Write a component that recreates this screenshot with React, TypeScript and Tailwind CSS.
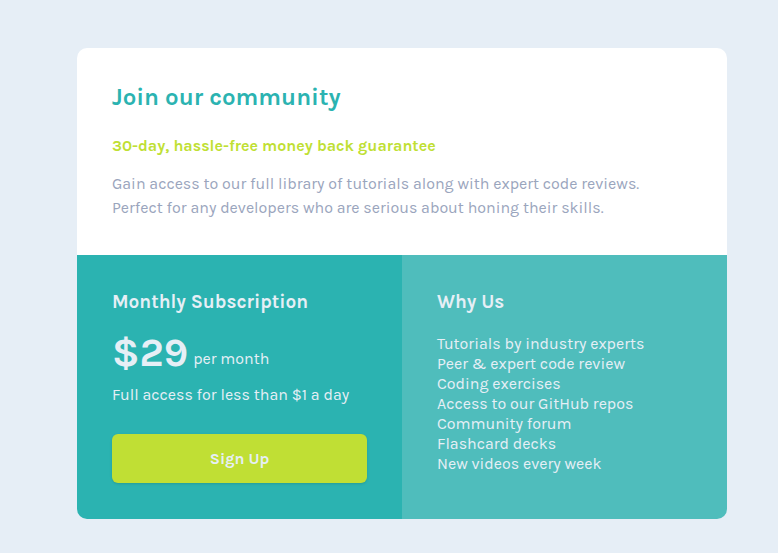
export default function App() {
  const reasons = [
    "Tutorials by industry experts",
    "Peer & expert code review",
    "Coding exercises",
    "Access to our GitHub repos",
    "Community forum",
    "Flashcard decks",
    "New videos every week",
  ];

  return (
    <div
      className="min-h-[553px] w-full bg-[#e6eef6] pt-12 pl-[77px]"
      style={{ fontFamily: "Karla, 'Open Sans', sans-serif" }}
    >
      <div className="w-[650px] overflow-hidden rounded-[10px]">
        <div className="h-[207px] bg-white px-[35px] pt-[35px]">
          <h1 className="text-2xl leading-7 font-bold text-[#2bb3b1]">
            Join our community
          </h1>
          <h2 className="mt-[25px] text-base leading-5 font-bold text-[#c0df34]">
            30-day, hassle-free money back guarantee
          </h2>
          <p className="mt-4 text-base leading-6 text-[#9aa5bd]">
            Gain access to our full library of tutorials along with expert code reviews.
            <br />
            Perfect for any developers who are serious about honing their skills.
          </p>
        </div>
        <div className="grid h-[264px] grid-cols-2">
          <div className="bg-[#2bb3b1] px-[35px] pt-[35px] text-[#e6eff6]">
            <h3 className="text-[19px] leading-6 font-bold">Monthly Subscription</h3>
            <div className="mt-[18px] flex items-end gap-[5px]">
              <span className="text-[40px] leading-[42px] font-bold">$29</span>
              <span className="pb-[5px] text-base leading-5">per month</span>
            </div>
            <p className="mt-[11px] text-base leading-5">Full access for less than $1 a day</p>
            <button className="mt-[29px] h-[49px] w-[255px] rounded-md bg-[#c0df34] text-base font-bold text-[#e6eff6] shadow-sm">
              Sign Up
            </button>
          </div>
          <div className="bg-[#4fbdbc] px-[35px] pt-[35px] text-[#e6eff6]">
            <h3 className="text-[19px] leading-6 font-bold">Why Us</h3>
            <ul className="mt-5 text-base leading-5">
              {reasons.map((r) => (
                <li key={r}>{r}</li>
              ))}
            </ul>
          </div>
        </div>
      </div>
    </div>
  );
}
